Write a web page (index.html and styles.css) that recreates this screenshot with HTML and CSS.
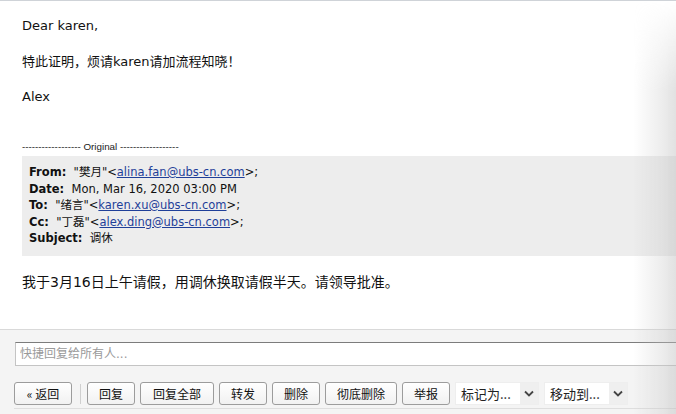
FILE: index.html
```html
<!DOCTYPE html>
<html lang="zh-CN">

<head>
  <meta charset="UTF-8">
  <title>邮件</title>
  <link rel="stylesheet" href="styles.css">
</head>

<body>

  <div class="mail">
    <div class="mail-body">
      <p>Dear karen,</p>
      <p>特此证明，烦请karen请加流程知晓！</p>
      <p>Alex</p>

      <div class="orig-sep">------------------ Original ------------------</div>
      <div class="orig-head">
        <div><b>From:</b> &nbsp;"樊月"&lt;<a href="#">alina.fan@ubs-cn.com</a>&gt;;</div>
        <div><b>Date:</b> &nbsp;Mon, Mar 16, 2020 03:00 PM</div>
        <div><b>To:</b> &nbsp;"绪言"&lt;<a href="#">karen.xu@ubs-cn.com</a>&gt;;</div>
        <div><b>Cc:</b> &nbsp;"丁磊"&lt;<a href="#">alex.ding@ubs-cn.com</a>&gt;;</div>
        <div><b>Subject:</b> &nbsp;调休</div>
      </div>

      <p class="orig-text">我于3月16日上午请假，用调休换取请假半天。请领导批准。</p>
    </div>

    <div class="footer">
      <div class="quick-reply">
        <input type="text" placeholder="快捷回复给所有人...">
      </div>
      <div class="toolbar">
        <button class="btn btn-back">« 返回</button>
        <span class="divider"></span>
        <button class="btn">回复</button>
        <button class="btn btn-wide">回复全部</button>
        <button class="btn">转发</button>
        <button class="btn">删除</button>
        <button class="btn btn-wide2">彻底删除</button>
        <button class="btn">举报</button>
        <div class="select">
          <span>标记为...</span>
          <span class="arrow">
            <svg width="10" height="7" viewBox="0 0 10 7"><path d="M1 1.5 L5 5.5 L9 1.5" fill="none" stroke="#444" stroke-width="1.8" /></svg>
          </span>
        </div>
        <div class="select">
          <span>移动到...</span>
          <span class="arrow">
            <svg width="10" height="7" viewBox="0 0 10 7"><path d="M1 1.5 L5 5.5 L9 1.5" fill="none" stroke="#444" stroke-width="1.8" /></svg>
          </span>
        </div>
      </div>
    </div>

    <!-- 오른쪽 가장자리 그림자 -->
    <div class="edge-shade"></div>
  </div>

</body>

</html>
```

FILE: styles.css
```css
html, body {
  margin: 0;
  padding: 0;
}

body {
  font-family: "DejaVu Sans", "Noto Sans CJK SC", sans-serif;
  color: #111;
  background: #fff;
  width: 676px;
  height: 414px;
  overflow: hidden;
}

.mail {
  position: relative;
  height: 414px;
  border-top: 1px solid #cfd3d8;
  box-sizing: border-box;
  overflow: hidden;
}

.mail-body {
  padding: 15px 0 0 22px;
  height: 328px;
  box-sizing: border-box;
  font-size: 13px;
}

.mail-body p {
  margin: 0 0 16.5px;
  line-height: 19px;
}

.orig-sep {
  margin-top: 35px;
  font-family: "Liberation Sans Narrow", "Liberation Sans", sans-serif;
  font-size: 9.8px;
  line-height: 12px;
  color: #222;
}

.orig-head {
  margin-top: 3px;
  background: #ededed;
  padding: 8px 7px 9px;
  font-size: 11.5px;
  line-height: 16.5px;
  color: #111;
}

.orig-head a {
  color: #1f3f99;
  text-decoration: underline;
}

.mail-body p.orig-text {
  margin-top: 17.5px;
  font-size: 14px;
}

.footer {
  border-top: 1px solid #d9d9d9;
  background: #f4f4f4;
  height: 85px;
  padding: 12px 0 0 15px;
  box-sizing: border-box;
}

.quick-reply input {
  display: block;
  width: 680px;
  height: 24px;
  box-sizing: border-box;
  border: 1px solid #c4c4c4;
  border-top-color: #7c7c7c;
  background: #fff;
  font-family: "DejaVu Sans", "Noto Sans CJK SC", sans-serif;
  font-size: 12px;
  padding: 0 4px;
  outline: none;
}

.quick-reply input::placeholder {
  color: #9a9a9a;
}

.toolbar {
  display: flex;
  align-items: center;
  gap: 5px;
  margin: 16px 0 0 -1px;
  padding-bottom: 3px;
  border-bottom: 1px solid #dedede;
  width: 700px;
}

.btn {
  width: 48px;
  height: 23px;
  padding: 0;
  border: 1px solid #9c9c9c;
  border-radius: 3px;
  background: linear-gradient(#ffffff, #f1f1f1);
  font-family: "Noto Sans CJK SC", sans-serif;
  font-size: 12px;
  color: #111;
}

.btn-back {
  width: 58px;
}

.btn-wide {
  width: 74px;
}

.btn-wide2 {
  width: 72px;
}

.divider {
  width: 1px;
  height: 20px;
  background: #cfcfcf;
  margin: 0 1px 0 3px;
}

.select {
  display: flex;
  align-items: center;
  justify-content: space-between;
  width: 84px;
  height: 23px;
  box-sizing: border-box;
  background: #fff;
  border: 1px solid #eee;
  padding-left: 5px;
  font-family: "Noto Sans CJK SC", sans-serif;
  font-size: 13px;
  color: #222;
}

.select .arrow {
  width: 18px;
  height: 21px;
  background: #efefef;
  display: flex;
  align-items: center;
  justify-content: center;
}

.edge-shade {
  position: absolute;
  top: 0;
  right: 0;
  width: 42px;
  height: 414px;
  background: linear-gradient(to right, rgba(200, 200, 200, 0), rgba(200, 200, 200, 0.35) 70%, rgba(190, 190, 190, 0.45));
  -webkit-mask-image: linear-gradient(to bottom, transparent 0, #000 90px);
  mask-image: linear-gradient(to bottom, transparent 0, #000 90px);
  pointer-events: none;
}
```
